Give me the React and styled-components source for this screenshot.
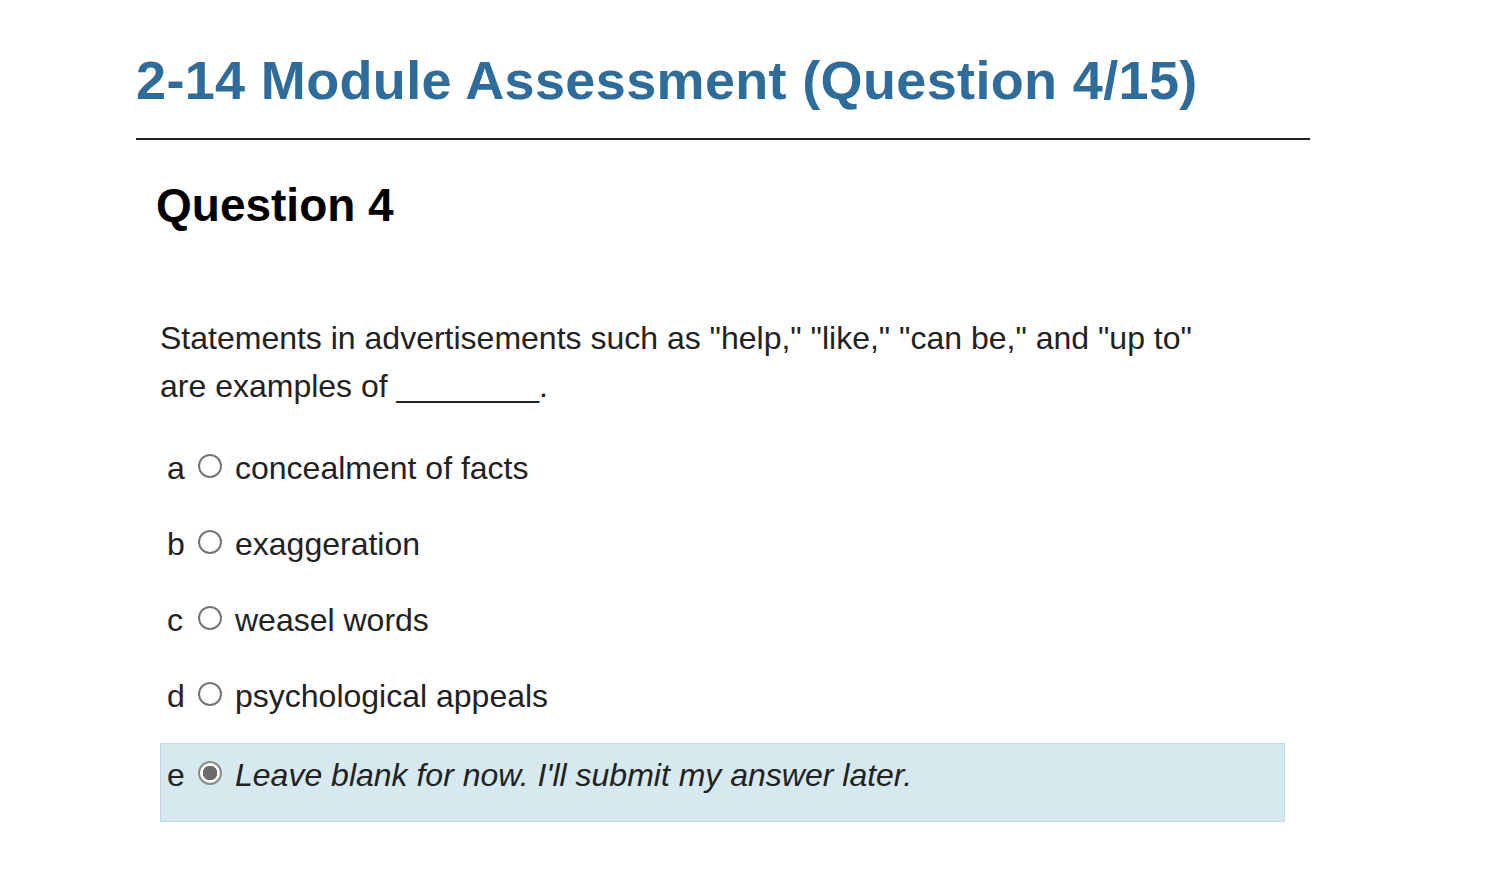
import React from 'react';
import styled, { createGlobalStyle } from 'styled-components';

const GlobalStyle = createGlobalStyle`
    body {
        margin: 0;
        background: #fff;
        font-family: "Liberation Sans", Arial, Helvetica, sans-serif;
    }
`;

const Page = styled.div`
    width: 1174px;
    padding: 48px 0 40px 136px;
`;

const Title = styled.h1`
    margin: 0;
    font-size: 54px;
    line-height: 1.2;
    font-weight: 700;
    color: #2e6d9b;
    letter-spacing: 0.35px;
`;

const Divider = styled.hr`
    margin: 25px 0 0;
    border: 0;
    height: 2px;
    background: #222;
`;

const QuestionBlock = styled.section`
    padding: 38px 25px 0 20px;
`;

const QuestionHeading = styled.h2`
    margin: 0;
    font-size: 46px;
    line-height: 1.2;
    font-weight: 700;
    color: #000;
`;

const Prompt = styled.p`
    margin: 81px 0 26px 4px;
    font-size: 32px;
    line-height: 48px;
    color: #222;
`;

const Options = styled.div`
    margin-left: 4px;
    display: flex;
    flex-direction: column;
`;

const Option = styled.label`
    display: flex;
    align-items: center;
    padding: 7px 0 ${p => (p.$selected ? 22 : 19)}px 6px;
    margin-top: ${p => (p.$selected ? 3 : 0)}px;
    border: 1px solid ${p => (p.$selected ? '#bcdde5' : 'transparent')};
    background: ${p => (p.$selected ? '#d5e9ef' : 'transparent')};
    font-size: 32px;
    line-height: 48px;
    color: #222;
`;

const Letter = styled.span`
    width: 31px;
`;

const Radio = styled.span`
    box-sizing: border-box;
    width: 24px;
    height: 24px;
    margin-right: 13px;
    border-radius: 50%;
    border: 2px solid ${p => (p.$checked ? '#8a8a8a' : '#767676')};
    background: ${p => (p.$checked ? 'radial-gradient(circle, #6b6b6b 0 7px, #fff 7.5px)' : '#fff')};
    flex-shrink: 0;
    position: relative;
    top: -2px;
`;

const OptionText = styled.span`
    font-style: ${p => (p.$italic ? 'italic' : 'normal')};
`;

const choices = [
    { letter: 'a', text: 'concealment of facts' },
    { letter: 'b', text: 'exaggeration' },
    { letter: 'c', text: 'weasel words' },
    { letter: 'd', text: 'psychological appeals' },
    { letter: 'e', text: "Leave blank for now. I'll submit my answer later.", blank: true },
];

const App = () => {
    return (
        <>
            <GlobalStyle />
            <Page>
                <Title>2-14 Module Assessment (Question 4/15)</Title>
                <Divider />
                <QuestionBlock>
                    <QuestionHeading>Question 4</QuestionHeading>
                    <Prompt>
                        Statements in advertisements such as "help," "like," "can be," and "up to"
                        <br />
                        are examples of ________.
                    </Prompt>
                    <Options>
                        {choices.map(choice => (
                            <Option key={choice.letter} $selected={choice.blank}>
                                <Letter>{choice.letter}</Letter>
                                <Radio $checked={choice.blank} />
                                <OptionText $italic={choice.blank}>{choice.text}</OptionText>
                            </Option>
                        ))}
                    </Options>
                </QuestionBlock>
            </Page>
        </>
    );
};

export default App;
